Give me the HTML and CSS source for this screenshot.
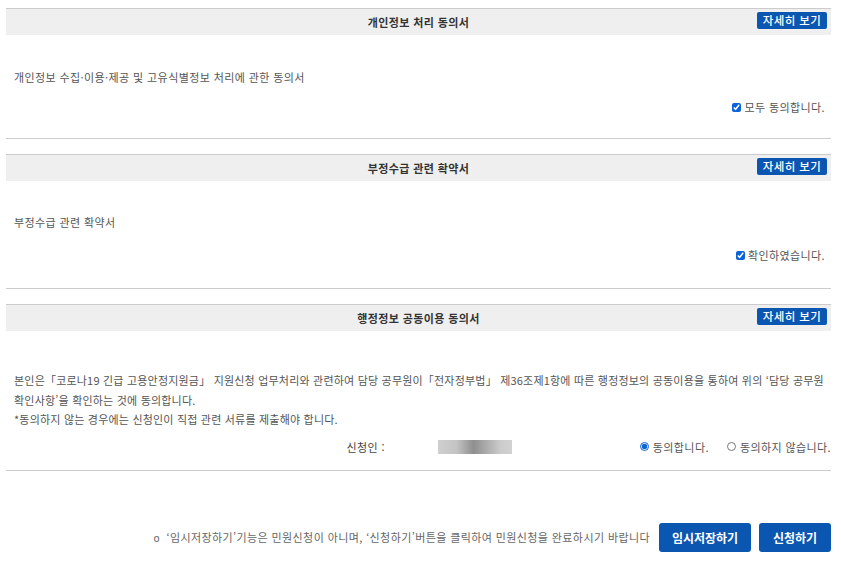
FILE: index.html
```html
<!DOCTYPE html>
<html lang="ko">
<head>
<meta charset="utf-8">
<link rel="stylesheet" href="styles.css">
</head>
<body>
<div class="page">
  <section class="agree">
    <div class="agree-head">
      <h3 class="agree-title">개인정보 처리 동의서</h3>
      <button class="btn-detail">자세히 보기</button>
    </div>
    <div class="agree-body">
      <p class="agree-text">개인정보 수집·이용·제공 및 고유식별정보 처리에 관한 동의서</p>
      <label class="check"><input type="checkbox" checked> 모두 동의합니다.</label>
    </div>
  </section>

  <section class="agree">
    <div class="agree-head">
      <h3 class="agree-title">부정수급 관련 확약서</h3>
      <button class="btn-detail">자세히 보기</button>
    </div>
    <div class="agree-body pledge">
      <p class="agree-text">부정수급 관련 확약서</p>
      <label class="check"><input type="checkbox" checked> 확인하였습니다.</label>
    </div>
  </section>

  <section class="agree">
    <div class="agree-head">
      <h3 class="agree-title">행정정보 공동이용 동의서</h3>
      <button class="btn-detail">자세히 보기</button>
    </div>
    <div class="agree-body share">
      <p class="agree-text long">본인은「코로나19 긴급 고용안정지원금」 지원신청 업무처리와 관련하여 담당 공무원이「전자정부법」 제36조제1항에 따른 행정정보의 공동이용을 통하여 위의 ‘담당 공무원 확인사항’을 확인하는 것에 동의합니다.<br>*동의하지 않는 경우에는 신청인이 직접 관련 서류를 제출해야 합니다.</p>
      <div class="applicant">
        <span class="applicant-label">신청인 :</span>
        <span class="applicant-name"></span>
        <div class="choices">
          <label class="radio"><input type="radio" name="share" checked> 동의합니다.</label>
          <label class="radio"><input type="radio" name="share"> 동의하지 않습니다.</label>
        </div>
      </div>
    </div>
  </section>

  <div class="footer">
    <p class="notice"><span class="bullet">o</span> ‘임시저장하기’기능은 민원신청이 아니며, ‘신청하기’버튼을 클릭하여 민원신청을 완료하시기 바랍니다</p>
    <button class="btn-main btn-save">임시저장하기</button>
    <button class="btn-main btn-apply">신청하기</button>
  </div>
</div>
</body>
</html>
```

FILE: styles.css
```css
* { box-sizing: border-box; }

html, body {
  margin: 0;
  padding: 0;
  background: #fff;
}

body {
  font-family: "Noto Sans CJK KR", "Noto Sans", sans-serif;
  font-size: 11px;
  letter-spacing: 0.4px;
  color: #555;
}

.page {
  width: 825px;
  margin: 8px 0 0 6px;
}

.agree {
  border-top: 1px solid #cccccc;
  border-bottom: 1px solid #cccccc;
  margin-bottom: 15px;
}

.agree-head {
  position: relative;
  height: 26px;
  background: #efefef;
  display: flex;
  align-items: center;
  justify-content: center;
}

.agree-title {
  margin: 0;
  font-size: 11px;
  font-weight: bold;
  color: #333;
  line-height: 26px;
}

.btn-detail {
  position: absolute;
  right: 4px;
  top: 3px;
  height: 17px;
  width: 70px;
  padding: 0;
  border: 0;
  border-radius: 2px;
  background: #0b56b0;
  color: #fff;
  font-family: inherit;
  font-size: 11.5px;
  font-weight: 500;
  letter-spacing: 0.4px;
  line-height: 17px;
}

.agree-body {
  padding: 33px 6px 22px 8px;
  display: flex;
  flex-direction: column;
}

.agree-body.pledge {
  padding: 32px 6px 24px 8px;
}

.agree-body.pledge .check {
  margin-top: 15px;
}

.agree-text {
  margin: 0;
  line-height: 18px;
}

.check {
  align-self: flex-end;
  margin-top: 12px;
  line-height: 18px;
  display: flex;
  align-items: center;
  gap: 3px;
}

.check input, .radio input {
  width: 9px;
  height: 9px;
  margin: 0;
  accent-color: #0b63d8;
}

.agree-body.share {
  padding: 40px 0 13px 8px;
}

.long {
  line-height: 19.5px;
  letter-spacing: 0.2px;
}

.applicant {
  display: flex;
  align-items: center;
  height: 20px;
  margin-top: 7px;
}

.applicant-label {
  width: 371px;
  text-align: right;
  color: #444;
}

.applicant-name {
  margin-left: 53px;
  width: 74px;
  height: 14px;
  background: linear-gradient(to right, #cfcfcf 0%, #c4c4c4 25%, #8f8f8f 48%, #a6a6a6 62%, #cccccc 85%, #d2d2d2 100%);
}

.choices {
  margin-left: auto;
  display: flex;
  gap: 18px;
}

.radio {
  display: flex;
  align-items: center;
  gap: 4px;
}

.footer {
  margin-top: 52px;
  display: flex;
  justify-content: flex-end;
  align-items: center;
}

.notice {
  margin: 0 9px 0 0;
  color: #666;
}

.bullet {
  font-family: "DejaVu Sans", sans-serif;
  font-size: 10px;
  margin-right: 3px;
}

.btn-main {
  height: 29px;
  border: 0;
  border-radius: 3px;
  background: #0b56b0;
  color: #fff;
  font-family: inherit;
  font-weight: bold;
  font-size: 12px;
  letter-spacing: 0;
  padding: 0;
}

.btn-save { width: 92px; }
.btn-apply { width: 72px; margin-left: 8px; }
```
